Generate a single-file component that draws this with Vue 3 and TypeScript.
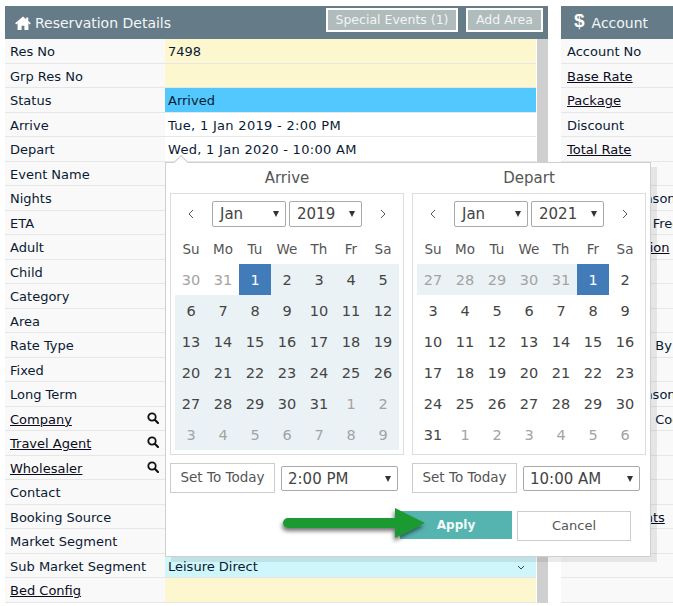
<script setup lang="ts">
const leftRows = [
  { label: 'Res No', value: '7498', tone: 'cream' },
  { label: 'Grp Res No', value: '', tone: 'cream' },
  { label: 'Status', value: 'Arrived', tone: 'blue' },
  { label: 'Arrive', value: 'Tue, 1 Jan 2019 - 2:00 PM', tone: 'plain date' },
  { label: 'Depart', value: 'Wed, 1 Jan 2020 - 10:00 AM', tone: 'plain date' },
  { label: 'Event Name' }, { label: 'Nights' }, { label: 'ETA' }, { label: 'Adult' },
  { label: 'Child' }, { label: 'Category' }, { label: 'Area' }, { label: 'Rate Type' },
  { label: 'Fixed' }, { label: 'Long Term' },
  { label: 'Company', link: true, search: true },
  { label: 'Travel Agent', link: true, search: true },
  { label: 'Wholesaler', link: true, search: true },
  { label: 'Contact' }, { label: 'Booking Source' }, { label: 'Market Segment' },
  { label: 'Sub Market Segment', value: 'Leisure Direct', tone: 'aqua', chevron: true },
  { label: 'Bed Config', link: true, value: '', tone: 'cream' },
] as { label: string; value?: string; tone?: string; link?: boolean; search?: boolean; chevron?: boolean }[]

const rightRows = [
  { label: 'Account No' }, { label: 'Base Rate', link: true }, { label: 'Package', link: true },
  { label: 'Discount' }, { label: 'Total Rate', link: true }, { label: '' },
  { label: 'Discount Reason' }, { label: 'Discount For Free' }, { label: 'Communication', link: true },
  { label: '' }, { label: '' }, { label: '' }, { label: 'Confirmation By' },
  { label: '' }, { label: 'Discount Reason' }, { label: 'Confirmation Code' },
  { label: '' }, { label: '' }, { label: '' }, { label: 'Res Comments', link: true },
  { label: '' }, { label: '' }, { label: '' },
] as { label: string; link?: boolean }[]

const weekdays = ['Su', 'Mo', 'Tu', 'We', 'Th', 'Fr', 'Sa']

type Day = { n: number; muted?: boolean; range?: boolean; active?: boolean }

function buildDays(first: number, prevLen: number, len: number, start: number, range: (i: number) => boolean): Day[] {
  const out: Day[] = []
  for (let i = 0; i < 42; i++) {
    const offset = i - first
    let n: number
    let muted = false
    if (offset < 0) { n = prevLen + offset + 1; muted = true }
    else if (offset >= len) { n = offset - len + 1; muted = true }
    else n = offset + 1
    out.push({ n, muted, range: range(i), active: i === start })
  }
  return out
}

const calendars = [
  {
    title: 'Arrive', month: 'Jan', year: '2019', time: '2:00 PM',
    days: buildDays(2, 31, 31, 2, (i) => i > 2),
  },
  {
    title: 'Depart', month: 'Jan', year: '2021', time: '10:00 AM',
    days: buildDays(5, 31, 31, 5, (i) => i < 5),
  },
]
</script>

<template>
  <div class="page">
    <section class="panel main">
      <header class="bar">
        <svg class="home" viewBox="0 0 18 16"><path d="M9 .6 0 8.400l1.200 1.300L2.800 8.400V16h4.600v-5h3.200v5h4.600V8.400l1.600 1.300L18 8.400l-3-2.600V1.600h-2.400v2.100z" fill="#fff"/></svg>
        <span class="bar-title">Reservation Details</span>
        <span class="bar-actions">
          <button class="bar-btn events">Special Events (1)</button>
          <button class="bar-btn area">Add Area</button>
        </span>
      </header>
      <div class="body">
        <div class="rows">
          <div v-for="r in leftRows" :key="r.label" class="row">
            <div class="label">
              <span :class="{ link: r.link }">{{ r.label }}</span>
              <svg v-if="r.search" class="search" viewBox="0 0 12 12"><circle cx="5" cy="5" r="3.700" fill="none" stroke="#111" stroke-width="1.800"/><path d="M7.800 7.800 11 11" stroke="#111" stroke-width="2.200" stroke-linecap="round"/></svg>
            </div>
            <div class="value" :class="r.tone">
              {{ r.value }}
              <svg v-if="r.chevron" class="chev" viewBox="0 0 8 5"><path d="M1 1l3 3 3-3" fill="none" stroke="#345" stroke-width="1"/></svg>
            </div>
          </div>
        </div>
        <div class="scroll"></div>
      </div>
    </section>

    <section class="panel side">
      <header class="bar">
        <span class="dollar">$</span>
        <span class="bar-title">Account</span>
      </header>
      <div class="rows">
        <div v-for="(r, i) in rightRows" :key="i" class="row">
          <div class="label side-label"><span :class="{ link: r.link }">{{ r.label }}</span></div>
        </div>
      </div>
    </section>

    <div class="picker">
      <span class="caret"></span>
      <div class="cals">
        <div v-for="c in calendars" :key="c.title" class="cal-col">
          <h3 class="cal-title">{{ c.title }}</h3>
          <div class="cal">
            <div class="cal-nav">
              <svg class="nav-arrow" viewBox="0 0 6 10"><path d="M5 1 1 5l4 4" fill="none" stroke="#555" stroke-width="1"/></svg>
              <span class="sel month">{{ c.month }}<i class="tri"></i></span>
              <span class="sel year">{{ c.year }}<i class="tri"></i></span>
              <svg class="nav-arrow" viewBox="0 0 6 10"><path d="M1 1l4 4-4 4" fill="none" stroke="#555" stroke-width="1"/></svg>
            </div>
            <div class="grid">
              <div v-for="w in weekdays" :key="w" class="wk">{{ w }}</div>
              <div
                v-for="(d, i) in c.days"
                :key="i"
                class="day"
                :class="{ muted: d.muted, range: d.range, active: d.active }"
              >{{ d.n }}</div>
            </div>
          </div>
          <div class="cal-foot">
            <button class="today">Set To Today</button>
            <span class="sel time">{{ c.time }}<i class="tri"></i></span>
          </div>
        </div>
      </div>
      <div class="actions">
        <button class="apply">Apply</button>
        <button class="cancel">Cancel</button>
      </div>
      <svg class="pointer" viewBox="0 0 150 44">
        <defs>
          <filter id="pshadow" x="-10%" y="-30%" width="120%" height="170%">
            <feDropShadow dx="-1" dy="3" stdDeviation="2.200" flood-color="#000" flood-opacity="0.550"/>
          </filter>
        </defs>
        <path d="M6 13H113V3L143 18 113 33V23H6a5 5 0 0 1 0-10z" fill="#1c9a30" filter="url(#pshadow)"/>
      </svg>
    </div>
  </div>
</template>

<style scoped>
.page {
  position: relative;
  width: 673px;
  height: 606px;
  overflow: hidden;
  background: #fff;
  font-family: "DejaVu Sans", sans-serif;
  font-size: 13px;
  color: #0a1a33;
  display: flex;
  padding: 6px 0 0 5px;
  box-sizing: border-box;
}
button { font-family: inherit; cursor: pointer; }
.panel { display: flex; flex-direction: column; flex: none; }
.main { width: 543px; margin-right: 13px; }
.side { width: 112px; }
.bar {
  height: 33px;
  flex: none;
  background: #657b88;
  color: #fff;
  display: flex;
  align-items: center;
  font-size: 14px;
}
.home { width: 16px; height: 14px; margin-left: 10px; margin-right: 4px; }
.bar-title { color: #f4f7f8; }
.bar-actions { margin-left: auto; display: flex; gap: 8px; margin-right: 5px; margin-top: -6px; }
.bar-btn {
  height: 24px;
  padding: 0;
  background: #b0bbbc;
  color: #f2f5f5;
  border: 2px solid #fff;
  font-size: 12.500px;
}
.events { width: 132px; }
.area { width: 77px; }
.dollar { font-family: "Liberation Sans", sans-serif; font-weight: 700; font-size: 19px; margin: -3px 7px 0 13px; }
.body { display: flex; }
.rows { flex: 1; min-width: 0; }
.row {
  height: 24.500px;
  display: flex;
  box-sizing: border-box;
  border-bottom: 1px solid #e6e6e6;
}
.label {
  width: 160px;
  flex: none;
  background: #f9f9f9;
  padding: 2px 0 0 5px;
  box-sizing: border-box;
  display: flex;
  align-items: center;
  position: relative;
  white-space: nowrap;
}
.side-label { width: 112px; overflow: hidden; padding-left: 6px; }
.link { text-decoration: underline; color: #0a0a20; }
.search { position: absolute; right: 6px; top: 5px; width: 12px; height: 12px; }
.value {
  flex: 1;
  display: flex;
  align-items: center;
  padding: 2px 0 0 3px;
  position: relative;
  background: #fff;
}
.date { letter-spacing: 0.300px; }
.cream { background: #fdf7d0; }
.blue { background: #52c8fe; }
.aqua { background: #cff6fa; }
.chev { position: absolute; right: 11px; top: 11px; width: 8px; height: 5px; }
.scroll { width: 11px; margin-left: 1px; flex: none; background: #cfcfcf; }

.picker {
  position: absolute;
  left: 165px;
  top: 162px;
  width: 486px;
  height: 395px;
  box-sizing: border-box;
  background: #fff;
  border: 1px solid #cfcfcf;
  box-shadow: 6px 5px 0 rgba(0, 0, 0, 0.08);
  padding: 0 4px;
  color: #444;
  font-size: 14.500px;
}
.caret {
  position: absolute;
  left: 10px;
  top: -6px;
  width: 9px;
  height: 9px;
  background: #fff;
  border-left: 1px solid #cfcfcf;
  border-top: 1px solid #cfcfcf;
  transform: rotate(45deg);
}
.cals { display: flex; gap: 8px; }
.cal-col { width: 234px; display: flex; flex-direction: column; }
.cal-title {
  margin: 0;
  height: 30px;
  line-height: 30px;
  text-align: center;
  font-weight: 400;
  font-size: 15px;
  color: #555;
}
.cal {
  height: 262px;
  box-sizing: border-box;
  border: 1px solid #ddd;
  padding: 0 4px;
}
.cal-nav {
  height: 39px;
  display: flex;
  align-items: center;
  padding: 0 0 0 13px;
  box-sizing: border-box;
}
.nav-arrow { width: 6px; height: 10px; flex: none; }
.nav-arrow:first-child { margin-right: 18px; }
.nav-arrow:last-child { margin-left: 18px; }
.sel {
  position: relative;
  display: block;
  box-sizing: border-box;
  border: 1px solid #aaa;
  border-radius: 2px;
  background: #fff;
  color: #444;
  height: 26px;
  line-height: 24px;
  padding-left: 7px;
  font-size: 15px;
}
.tri {
  position: absolute;
  right: 6px;
  top: 9px;
  width: 0;
  height: 0;
  border-left: 3.500px solid transparent;
  border-right: 3.500px solid transparent;
  border-top: 6px solid #333;
}
.month { width: 74px; margin-right: 3px; }
.year { width: 73px; }
.grid {
  display: grid;
  grid-template-columns: repeat(7, 32px);
  grid-auto-rows: 31px;
}
.wk, .day { display: flex; align-items: center; justify-content: center; }
.wk { color: #555; font-size: 13.500px; }
.muted { color: #a3a3a3; }
.range { background: #ebf2f6; }
.active { background: #417bb8; color: #fff; }
.cal-foot { display: flex; align-items: center; gap: 6px; margin-top: 8px; height: 30px; }
.today {
  width: 105px;
  height: 30px;
  padding: 0 0 2px;
  background: #fff;
  border: 1px solid #ccc;
  color: #555;
  font-size: 13.500px;
}
.time { width: 117px; height: 25px; line-height: 24px; padding-left: 6px; }
.actions { display: flex; gap: 5px; padding-left: 230px; margin-top: 18px; align-items: flex-start; }
.apply {
  width: 112px;
  height: 28px;
  padding: 0;
  background: #55b4b0;
  color: #f2fbfa;
  border: 0;
  font-weight: 700;
  font-size: 12px;
}
.cancel {
  width: 114px;
  height: 30px;
  padding: 0 0 2px;
  background: #fff;
  border: 1px solid #ccc;
  color: #555;
  font-size: 13px;
}
.pointer {
  position: absolute;
  left: 116px;
  top: 342px;
  width: 150px;
  height: 44px;
  overflow: visible;
}
</style>
